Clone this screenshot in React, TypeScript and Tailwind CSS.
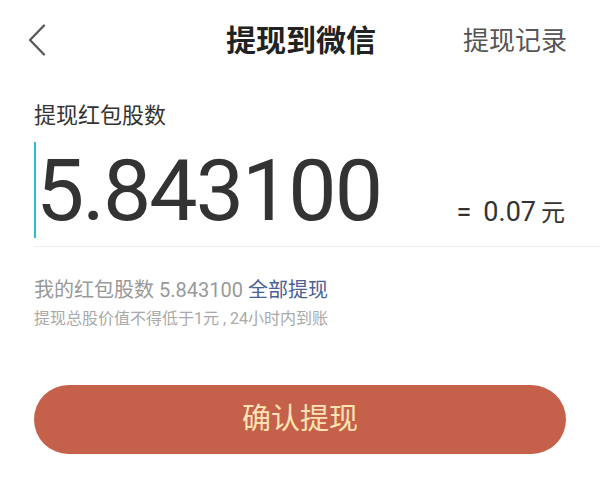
import React from "react";

export default function App() {
  const cjk = { fontFamily: 'Roboto, "Noto Sans CJK SC", sans-serif' };
  return (
    <div className="w-[600px] h-[487px] bg-white text-[#333]" style={cjk}>
      <div className="relative h-[82px] flex items-center justify-center">
        <svg className="absolute left-[27px] top-[24px]" width="20" height="32" viewBox="0 0 20 32" fill="none">
          <path d="M17 1.5 L3 16 L17 30.5" stroke="#555" strokeWidth="2.2" strokeLinecap="round" strokeLinejoin="round" />
        </svg>
        <div className="text-[30px] font-bold leading-none pl-[2px] text-[#222]">提现到微信</div>
        <div className="absolute right-[33px] top-[28px] text-[26px] leading-none text-[#555]">提现记录</div>
      </div>
      <div className="pl-[34px]">
        <div className="text-[22px] leading-none mt-[23px] text-[#333]">提现红包股数</div>
        <div className="flex items-end mt-[15px] h-[105px] border-b border-[#eeeeee] pr-[35px]">
          <div className="w-[2px] h-[96px] bg-[#2bbfd0] self-start"></div>
          <div className="text-[86px] leading-none text-[#333] tracking-[-2px] mb-[12px]">5.843100</div>
          <div className="ml-auto flex items-baseline text-[27px] leading-none mb-[20px] text-[#333]">
            <span>=</span>
            <span className="ml-[12px]">0.07</span>
            <span className="ml-[5px] text-[24px]">元</span>
          </div>
        </div>
        <div className="mt-[33px] text-[20px] leading-none text-[#999]">
          我的红包股数 5.843100 <span className="text-[#4a6196]">全部提现</span>
        </div>
        <div className="mt-[11px] text-[16px] leading-none text-[#a9a9a9]">提现总股价值不得低于1元 , 24小时内到账</div>
      </div>
      <div className="px-[34px] mt-[58px]">
        <div className="h-[69px] rounded-full bg-[#c5614a] flex items-center justify-center text-[29px] text-[#fde3b3]">确认提现</div>
      </div>
    </div>
  );
}
